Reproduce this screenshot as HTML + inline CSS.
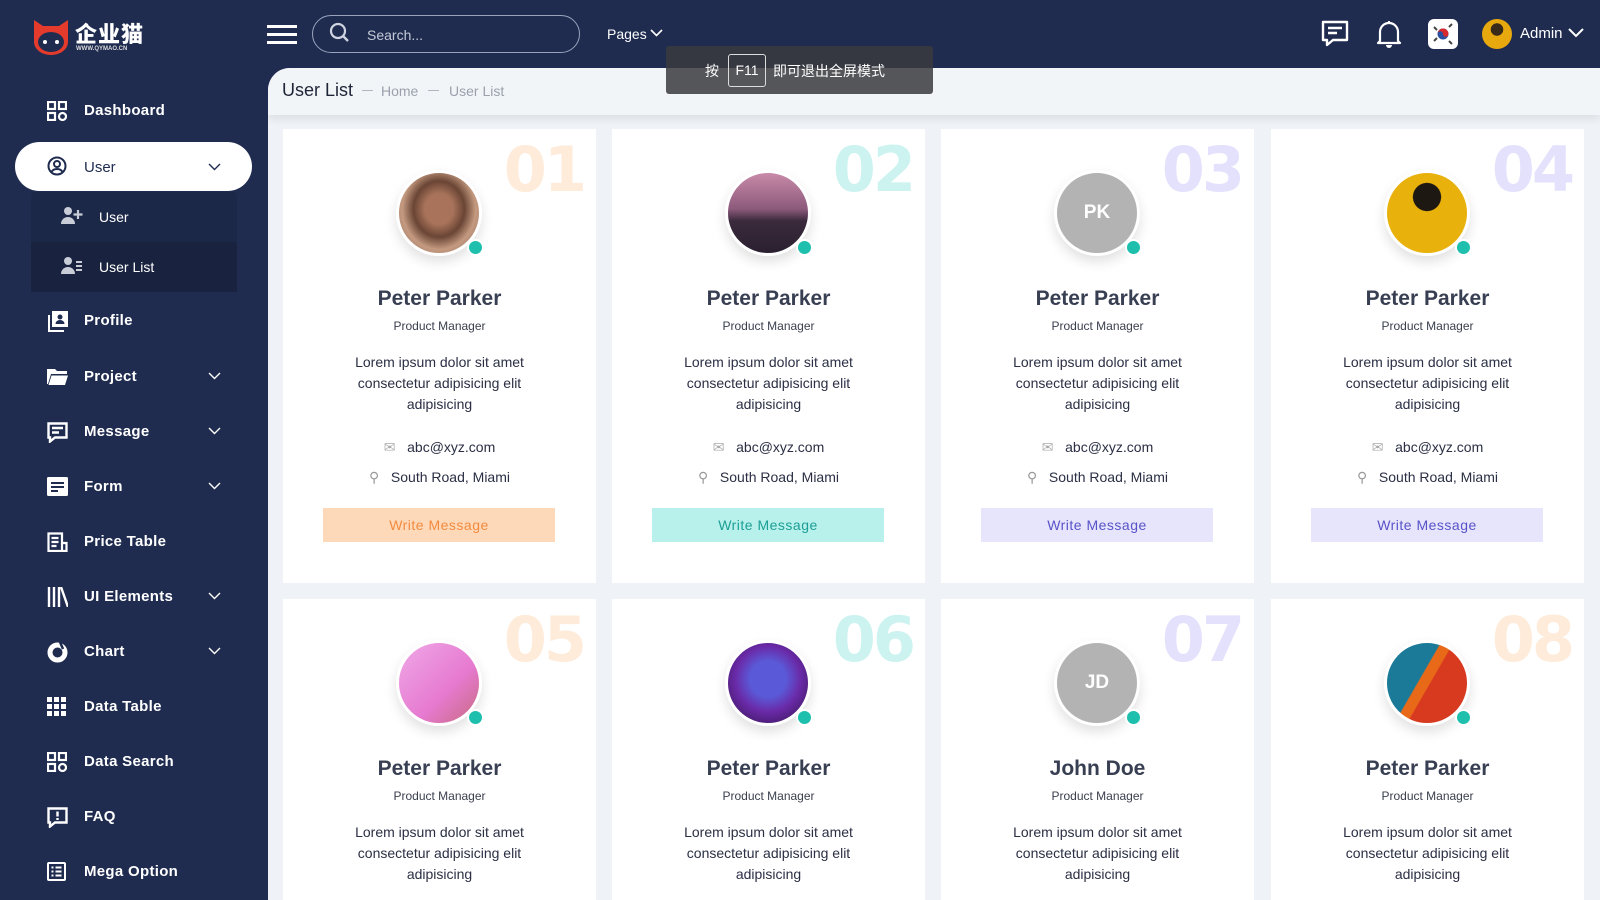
<!DOCTYPE html>
<html><head><meta charset="utf-8"><style>
*{box-sizing:border-box;margin:0;padding:0}
html,body{width:1600px;height:900px;overflow:hidden}
body{background:#1f2c50;font-family:"Liberation Sans","Noto Sans CJK SC",sans-serif;position:relative}
.a{position:absolute}
.nav{position:absolute;left:0;width:268px;height:40px;color:#fff;font-size:15px;font-weight:bold;letter-spacing:.3px}
.nav svg{position:absolute;left:47px;top:10px}
.nav span{position:absolute;left:84px;top:11px}
.nav .ch{position:absolute;left:208px;top:15px}
.main{position:absolute;left:268px;top:68px;width:1332px;height:832px;background:#eff2f6;border-top-left-radius:22px;overflow:hidden}
.bc{position:absolute;left:0;top:0;width:1332px;height:47px;background:#f2f5f8;box-shadow:0 4px 8px rgba(0,0,0,.08)}
.card{position:absolute;width:313px;height:454px;background:#fff;text-align:center;color:#2e3448;overflow:hidden}
.num{position:absolute;right:12px;top:4px;font-family:"DejaVu Sans",sans-serif;font-size:62px;font-weight:bold;letter-spacing:-3px}
.av{position:absolute;left:113px;top:41px;width:86px;height:86px;border-radius:50%;border:3px solid #fff;box-shadow:0 6px 12px rgba(0,0,0,.12);color:#fff;font-weight:bold;font-size:19px;line-height:80px}
.chk{position:absolute;left:68px;top:66px;width:17px;height:17px;border-radius:50%;background:#1fbfae;border:2px solid #fff}
.nm{position:absolute;left:0;right:0;top:158px;font-size:21px;font-weight:bold;color:#383f52}
.rl{position:absolute;left:0;right:0;top:190px;font-size:12px;color:#3a3f4d}
.lo{position:absolute;left:52px;right:52px;top:223px;font-size:14px;line-height:21px;color:#2a2f44}
.em{position:absolute;left:0;right:0;top:310px;font-size:14px;color:#2a2f44}
.ad{position:absolute;left:0;right:0;top:340px;font-size:14px;color:#2a2f44}
.btn{position:absolute;left:40px;top:379px;width:232px;height:34px;line-height:34px;font-size:14px;letter-spacing:.5px}
</style></head><body>
<svg class="a" style="left:31px;top:18px" width="40" height="38" viewBox="0 0 40 38"><path d="M3 2 L12 8 H28 L37 2 V24 A17 13 0 0 1 3 24Z" fill="#e53b2c"/><ellipse cx="20" cy="24" rx="13" ry="10" fill="#1f2c50"/><circle cx="14" cy="24" r="2" fill="#fff"/><circle cx="26" cy="24" r="2" fill="#fff"/></svg>
<div class="a" style="left:75px;top:17px;color:#fff;font-size:22px;font-weight:900;font-family:'Noto Sans CJK SC',sans-serif;letter-spacing:1px">企业猫</div>
<div class="a" style="left:76px;top:46px;color:#ddd;font-size:6px;font-weight:bold">WWW.QYMAO.CN</div>
<div class="a" style="left:267px;top:25px;width:30px;height:3px;background:#fff"></div>
<div class="a" style="left:267px;top:33px;width:30px;height:3px;background:#fff"></div>
<div class="a" style="left:267px;top:41px;width:30px;height:3px;background:#fff"></div>
<div class="a" style="left:312px;top:15px;width:268px;height:38px;border:1.5px solid #9aa3bb;border-radius:20px"></div>
<svg class="a" style="left:329px;top:22px" width="22" height="22" viewBox="0 0 22 22"><circle cx="9" cy="9" r="7" fill="none" stroke="#cfd4e0" stroke-width="2.2"/><path d="M14 14l5 5" stroke="#cfd4e0" stroke-width="2.4"/></svg>
<div class="a" style="left:367px;top:27px;color:#c5cad8;font-size:14px">Search...</div>
<div class="a" style="left:607px;top:26px;color:#fff;font-size:14px">Pages</div>
<svg class="a" style="left:650px;top:29px" width="13" height="9"><path d="M1 1l5.5 5.5L12 1" stroke="#fff" stroke-width="1.6" fill="none"/></svg>
<svg class="a" style="left:1321px;top:20px" width="28" height="27" viewBox="0 0 28 27"><path d="M2 2h24v18H12l-6 5v-5H2z" fill="none" stroke="#fff" stroke-width="2.4" stroke-linejoin="round"/><path d="M7 8h14M7 13h9" stroke="#fff" stroke-width="2.4"/></svg>
<svg class="a" style="left:1376px;top:20px" width="26" height="28" viewBox="0 0 26 28"><path d="M4 21V12a9 9 0 0 1 18 0v9l2 2H2z" fill="none" stroke="#fff" stroke-width="2.2" stroke-linejoin="round"/><path d="M10 25a3 3 0 0 0 6 0" fill="#fff"/><path d="M13 1v2" stroke="#fff" stroke-width="2"/></svg>
<div class="a" style="left:1428px;top:19px;width:30px;height:30px;background:#fff;border-radius:6px"></div>
<svg class="a" style="left:1431px;top:22px" width="24" height="24" viewBox="0 0 24 24"><circle cx="12" cy="12" r="5.5" fill="#2a4fa0"/><path d="M6.5 12a5.5 5.5 0 0 1 11 0 2.75 2.75 0 0 1-5.5 0 2.75 2.75 0 0 0-5.5 0" fill="#d7282f"/><path d="M3 5l3 3M18 5l3-3M3 19l3-3M18 19l3 3" stroke="#444" stroke-width="2"/></svg>
<div class="a" style="left:1482px;top:19px;width:30px;height:30px;border-radius:50%;background:radial-gradient(circle at 50% 35%,#3a2a1a 0 25%,#e8a90e 26%)"></div>
<div class="a" style="left:1520px;top:25px;color:#fff;font-size:15px">Admin</div>
<svg class="a" style="left:1568px;top:28px" width="16" height="11"><path d="M1 1l7 7 7-7" stroke="#fff" stroke-width="2" fill="none"/></svg>
<div class="nav" style="top:91px"><svg width="20" height="20" viewBox="0 0 20 20" fill="none" stroke="#fff" stroke-width="2.2"><rect x="1" y="1" width="7" height="7"/><rect x="12" y="1" width="7" height="7"/><rect x="1" y="12" width="7" height="7"/><circle cx="15.5" cy="15.5" r="3.5"/></svg><span>Dashboard</span></div>
<div class="a" style="left:15px;top:142px;width:237px;height:49px;background:#fff;border-radius:25px"></div>
<svg class="a" style="left:47px;top:156px" width="20" height="20" viewBox="0 0 20 20" fill="none" stroke="#1f2c50" stroke-width="2"><circle cx="10" cy="10" r="8.5"/><circle cx="10" cy="8" r="3"/><path d="M4.5 16a6 5 0 0 1 11 0"/></svg>
<div class="a" style="left:84px;top:159px;color:#1f2c50;font-size:15px">User</div>
<svg class="a" style="left:208px;top:163px" width="13" height="8"><path d="M1 1l5.5 5.5L12 1" stroke="#1f2c50" stroke-width="1.4" fill="none"/></svg>
<div class="a" style="left:31px;top:192px;width:206px;height:100px;background:#1c2847;border-radius:4px"></div>
<div class="a" style="left:31px;top:242px;width:206px;height:50px;background:#19233f"></div>
<svg class="a" style="left:61px;top:207px" width="22" height="17" viewBox="0 0 22 17" fill="#c9cdd8"><circle cx="7" cy="4" r="4"/><path d="M0 17a7 7 0 0 1 14 0z"/><path d="M17 3v9M12.5 7.5h9" stroke="#c9cdd8" stroke-width="2.2"/></svg>
<div class="a" style="left:99px;top:209px;color:#fff;font-size:14px">User</div>
<svg class="a" style="left:61px;top:257px" width="22" height="17" viewBox="0 0 22 17" fill="#c9cdd8"><circle cx="7" cy="4" r="4"/><path d="M0 17a7 7 0 0 1 14 0z"/><path d="M15 5h6M15 9h6M15 13h6" stroke="#c9cdd8" stroke-width="2"/></svg>
<div class="a" style="left:99px;top:259px;color:#fff;font-size:14px">User List</div>
<div class="nav" style="top:301px"><svg width="21" height="21" viewBox="0 0 21 21" fill="#fff"><path d="M5 0h16v16H5z"/><path d="M1 4v17h16v-2H3V4z"/><circle cx="13" cy="6" r="2.5" fill="#1f2c50"/><path d="M8.5 13a4.5 4 0 0 1 9 0z" fill="#1f2c50"/></svg><span>Profile</span></div>
<div class="nav" style="top:357px"><svg width="21" height="18" viewBox="0 0 21 18" fill="#fff"><path d="M0 2h8l2 2h10v3H4L1 17H0z"/><path d="M4.5 8.5H21L18 18H1.5z"/></svg><span>Project</span><svg class="ch" width="13" height="8"><path d="M1 1l5.5 5.5L12 1" stroke="#fff" stroke-width="1.4" fill="none"/></svg></div>
<div class="nav" style="top:412px"><svg width="21" height="21" viewBox="0 0 21 21" fill="none" stroke="#fff" stroke-width="2.4"><path d="M1.5 1.5h18v14H8l-5 4v-4H1.5z"/><path d="M5 6h11M5 10.5h7"/></svg><span>Message</span><svg class="ch" width="13" height="8"><path d="M1 1l5.5 5.5L12 1" stroke="#fff" stroke-width="1.4" fill="none"/></svg></div>
<div class="nav" style="top:467px"><svg width="21" height="19" viewBox="0 0 21 19"><rect width="21" height="19" rx="1.5" fill="#fff"/><path d="M4 6h13M4 10h13M4 14h7" stroke="#1f2c50" stroke-width="2"/></svg><span>Form</span><svg class="ch" width="13" height="8"><path d="M1 1l5.5 5.5L12 1" stroke="#fff" stroke-width="1.4" fill="none"/></svg></div>
<div class="nav" style="top:522px"><svg width="21" height="20" viewBox="0 0 21 20" fill="none" stroke="#fff" stroke-width="2.2"><path d="M15 19H1.5V1.5H15V19h4.5V11H15"/><path d="M4.5 6h7M4.5 10h7M4.5 14h5"/></svg><span>Price Table</span></div>
<div class="nav" style="top:577px"><svg width="21" height="20" viewBox="0 0 21 20" stroke="#fff" stroke-width="2.4"><path d="M2 0v20M7 0v20M12 0v20M14 0l7 20"/></svg><span>UI Elements</span><svg class="ch" width="13" height="8"><path d="M1 1l5.5 5.5L12 1" stroke="#fff" stroke-width="1.4" fill="none"/></svg></div>
<div class="nav" style="top:632px"><svg width="21" height="21" viewBox="0 0 21 21"><circle cx="10.5" cy="10.5" r="7.5" fill="none" stroke="#fff" stroke-width="5"/><path d="M13 0l3 7" stroke="#1f2c50" stroke-width="2.5"/></svg><span>Chart</span><svg class="ch" width="13" height="8"><path d="M1 1l5.5 5.5L12 1" stroke="#fff" stroke-width="1.4" fill="none"/></svg></div>
<div class="nav" style="top:687px"><svg width="19" height="19" viewBox="0 0 19 19" fill="#fff"><rect x="0" y="0" width="5" height="5"/><rect x="7" y="0" width="5" height="5"/><rect x="14" y="0" width="5" height="5"/><rect x="0" y="7" width="5" height="5"/><rect x="7" y="7" width="5" height="5"/><rect x="14" y="7" width="5" height="5"/><rect x="0" y="14" width="5" height="5"/><rect x="7" y="14" width="5" height="5"/><rect x="14" y="14" width="5" height="5"/></svg><span>Data Table</span></div>
<div class="nav" style="top:742px"><svg width="20" height="20" viewBox="0 0 20 20" fill="none" stroke="#fff" stroke-width="2.2"><rect x="1" y="1" width="7" height="7"/><rect x="12" y="1" width="7" height="7"/><rect x="1" y="12" width="7" height="7"/><circle cx="15.5" cy="15.5" r="3.5"/></svg><span>Data Search</span></div>
<div class="nav" style="top:797px"><svg width="21" height="21" viewBox="0 0 21 21" fill="none" stroke="#fff" stroke-width="2.4"><path d="M1.5 1.5h18v14H8l-5 4v-4H1.5z"/><path d="M10.5 4.5v5M10.5 11v2"/></svg><span>FAQ</span></div>
<div class="nav" style="top:852px"><svg width="19" height="19" viewBox="0 0 19 19" fill="none" stroke="#fff" stroke-width="2"><rect x="1" y="1" width="17" height="17" rx="1"/><path d="M4.5 5.5h2M8.5 5.5h6M4.5 9.5h2M8.5 9.5h6M4.5 13.5h2M8.5 13.5h6"/></svg><span>Mega Option</span></div>
<div class="main">
<div class="bc"></div>
<div class="a" style="left:14px;top:12px;font-size:18px;color:#1f2538">User List</div>
<div class="a" style="left:94px;top:22px;width:11px;height:1px;background:#b0b6c2"></div>
<div class="a" style="left:113px;top:15px;font-size:14px;color:#9aa1ad">Home</div>
<div class="a" style="left:160px;top:22px;width:11px;height:1px;background:#b0b6c2"></div>
<div class="a" style="left:181px;top:15px;font-size:14px;color:#9aa1ad">User List</div>

<div class="card" style="left:15px;top:61px"><div class="num" style="color:#feebd9">01</div><div class="av" style="background:radial-gradient(ellipse at 50% 45%,#a8735a 0 25%,#6a4535 45%,#c49a80 65%,#8a6a5a)"><div class="chk"></div></div><div class="nm">Peter Parker</div><div class="rl">Product Manager</div><div class="lo">Lorem ipsum dolor sit amet consectetur adipisicing elit adipisicing</div><div class="em"><span style="color:#aaa">✉</span>&nbsp;&nbsp; abc@xyz.com</div><div class="ad"><span style="color:#999">⚲</span>&nbsp;&nbsp; South Road, Miami</div><div class="btn" style="background:#fed9b9;color:#f28b3f">Write Message</div></div>
<div class="card" style="left:344px;top:61px"><div class="num" style="color:#cdf3f0">02</div><div class="av" style="background:linear-gradient(180deg,#c98aa8,#8c5a7c 45%,#3a2a3c 60%,#2a2030)"><div class="chk"></div></div><div class="nm">Peter Parker</div><div class="rl">Product Manager</div><div class="lo">Lorem ipsum dolor sit amet consectetur adipisicing elit adipisicing</div><div class="em"><span style="color:#aaa">✉</span>&nbsp;&nbsp; abc@xyz.com</div><div class="ad"><span style="color:#999">⚲</span>&nbsp;&nbsp; South Road, Miami</div><div class="btn" style="background:#b8f0ec;color:#1b9f95">Write Message</div></div>
<div class="card" style="left:673px;top:61px"><div class="num" style="color:#e4e1fc">03</div><div class="av" style="background:#b3b3b3">PK<div class="chk"></div></div><div class="nm">Peter Parker</div><div class="rl">Product Manager</div><div class="lo">Lorem ipsum dolor sit amet consectetur adipisicing elit adipisicing</div><div class="em"><span style="color:#aaa">✉</span>&nbsp;&nbsp; abc@xyz.com</div><div class="ad"><span style="color:#999">⚲</span>&nbsp;&nbsp; South Road, Miami</div><div class="btn" style="background:#e7e5fb;color:#5853c9">Write Message</div></div>
<div class="card" style="left:1003px;top:61px"><div class="num" style="color:#e4e1fc">04</div><div class="av" style="background:radial-gradient(circle at 50% 30%,#1e1812 0 20%,#e9b10c 21%)"><div class="chk"></div></div><div class="nm">Peter Parker</div><div class="rl">Product Manager</div><div class="lo">Lorem ipsum dolor sit amet consectetur adipisicing elit adipisicing</div><div class="em"><span style="color:#aaa">✉</span>&nbsp;&nbsp; abc@xyz.com</div><div class="ad"><span style="color:#999">⚲</span>&nbsp;&nbsp; South Road, Miami</div><div class="btn" style="background:#e7e5fb;color:#5853c9">Write Message</div></div>

<div class="card" style="left:15px;top:531px"><div class="num" style="color:#feebd9">05</div><div class="av" style="background:linear-gradient(135deg,#f0a8e8,#e67ad0 60%,#c86a80)"><div class="chk"></div></div><div class="nm">Peter Parker</div><div class="rl">Product Manager</div><div class="lo">Lorem ipsum dolor sit amet consectetur adipisicing elit adipisicing</div></div>
<div class="card" style="left:344px;top:531px"><div class="num" style="color:#cdf3f0">06</div><div class="av" style="background:radial-gradient(circle at 50% 45%,#5a5ad8 0 30%,#6a2aa8 55%,#2a1040)"><div class="chk"></div></div><div class="nm">Peter Parker</div><div class="rl">Product Manager</div><div class="lo">Lorem ipsum dolor sit amet consectetur adipisicing elit adipisicing</div></div>
<div class="card" style="left:673px;top:531px"><div class="num" style="color:#e4e1fc">07</div><div class="av" style="background:#b3b3b3">JD<div class="chk"></div></div><div class="nm">John Doe</div><div class="rl">Product Manager</div><div class="lo">Lorem ipsum dolor sit amet consectetur adipisicing elit adipisicing</div></div>
<div class="card" style="left:1003px;top:531px"><div class="num" style="color:#feebd9">08</div><div class="av" style="background:linear-gradient(120deg,#1a7a98 0 42%,#e86a18 43% 52%,#d83a20 53%)"><div class="chk"></div></div><div class="nm">Peter Parker</div><div class="rl">Product Manager</div><div class="lo">Lorem ipsum dolor sit amet consectetur adipisicing elit adipisicing</div></div>
</div>
<div class="a" style="left:666px;top:46px;width:267px;height:48px;background:rgba(58,58,62,.85);border-radius:3px;color:#fff;font-size:14px">
<span class="a" style="left:39px;top:15px">按</span>
<span class="a" style="left:62px;top:8px;width:38px;height:33px;border:1px solid #ddd;border-radius:3px;text-align:center;line-height:31px">F11</span>
<span class="a" style="left:107px;top:15px">即可退出全屏模式</span>
</div>
</body></html>
